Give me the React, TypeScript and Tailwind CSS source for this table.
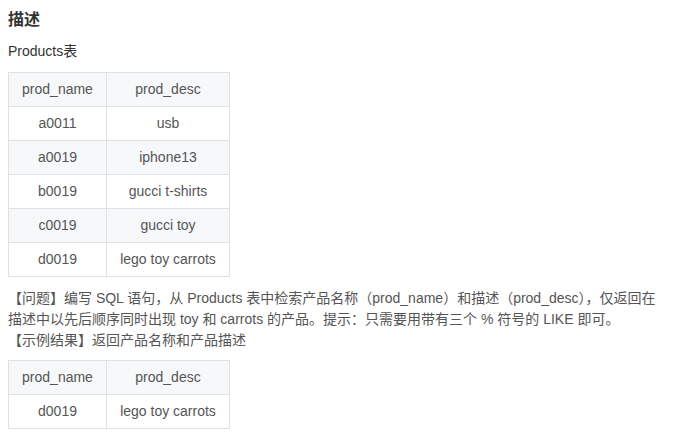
import React from "react";

const products = [
  ["a0011", "usb"],
  ["a0019", "iphone13"],
  ["b0019", "gucci t-shirts"],
  ["c0019", "gucci toy"],
  ["d0019", "lego toy carrots"],
];

const result = [["d0019", "lego toy carrots"]];

function DataTable({ rows }: { rows: string[][] }) {
  return (
    <table className="border-collapse text-[14px] text-[#555]">
      <thead>
        <tr className="bg-[#f6f8fa]">
          <th className="w-[98px] h-[34px] border border-[#dfe2e5] font-normal text-center">prod_name</th>
          <th className="w-[123px] h-[34px] border border-[#dfe2e5] font-normal text-center">prod_desc</th>
        </tr>
      </thead>
      <tbody>
        {rows.map((r, i) => (
          <tr key={i} className={i % 2 === 1 ? "bg-[#f6f8fa]" : "bg-white"}>
            <td className="h-[34px] border border-[#dfe2e5] text-center">{r[0]}</td>
            <td className="h-[34px] border border-[#dfe2e5] text-center">{r[1]}</td>
          </tr>
        ))}
      </tbody>
    </table>
  );
}

export default function App() {
  return (
    <div
      className="w-[677px] h-[442px] bg-white px-2 pt-[8px]"
      style={{ fontFamily: '"Liberation Sans", "Noto Sans CJK SC", sans-serif' }}
    >
      <h2 className="text-[16px] leading-[24px] font-bold text-[#333]">描述</h2>
      <p className="mt-[9px] text-[14px] leading-[20px] text-[#333]">Products表</p>
      <div className="mt-[11px]">
        <DataTable rows={products} />
      </div>
      <p className="mt-[11px] w-[660px] text-[14px] leading-[21px] text-[#555]">
        【问题】编写 SQL 语句，从 Products 表中检索产品名称（prod_name）和描述（prod_desc），仅返回在描述中以先后顺序同时出现 toy 和 carrots 的产品。提示：只需要用带有三个 % 符号的 LIKE 即可。
        <br />
        【示例结果】返回产品名称和产品描述
      </p>
      <div className="mt-[9px]">
        <DataTable rows={result} />
      </div>
    </div>
  );
}
